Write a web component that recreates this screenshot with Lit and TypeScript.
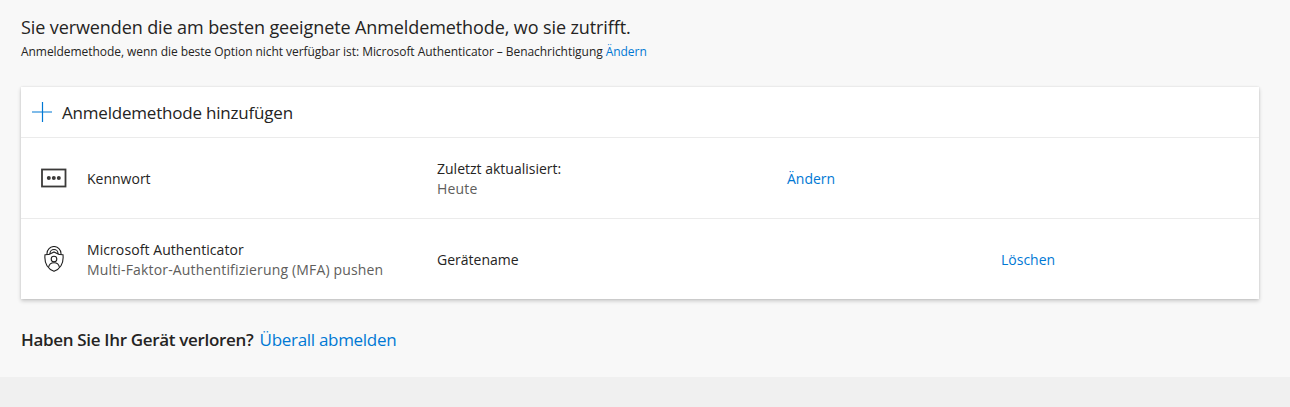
import { LitElement, html, css } from "lit";
import { customElement } from "lit/decorators.js";

@customElement("app-root")
export class AppRoot extends LitElement {
  static styles = css`
    :host { display: block; height: 407px; background: #f8f8f8; font-family: "Open Sans", "Noto Sans", sans-serif; color: #252423; overflow: hidden; }
    .main { height: 377px; padding: 0 31px 0 21px; box-sizing: border-box; background: #f8f8f8; }
    .page-foot { height: 30px; background: #f0f0f0; }
    .title { margin: 0; padding-top: 15px; font-size: 18px; line-height: 24px; font-weight: 400; letter-spacing: -0.1px; }
    .sub { margin: 0; padding-top: 3px; font-size: 12px; line-height: 20px; letter-spacing: -0.055px; }
    a { color: #0078d4; text-decoration: none; }
    .card { margin-top: 25px; background: #fff; box-shadow: 0 2px 4px rgba(0,0,0,.2), 0 0 2px rgba(0,0,0,.1); height: 212px; }
    .add { height: 50px; display: flex; align-items: center; gap: 10px; padding-left: 11px; font-size: 17px; letter-spacing: -0.2px; border-bottom: 1px solid #ebebeb; }
    .add span { padding-top: 1px; }
    .row { height: 80px; box-sizing: border-box; padding-top: 2px; display: grid; grid-template-columns: 66px 350px 350px 214px 1fr; align-items: center; font-size: 14px; line-height: 20px; }
    .row + .row { height: 81px; border-top: 1px solid #ebebeb; }
    .ico { display: flex; padding-left: 20px; margin-top: -2px; }
    .ico.shield { padding-left: 22px; }
    .name { letter-spacing: 0.08px; }
    .muted { color: #605e5c; }
    .row .muted { letter-spacing: 0.16px; }
    .foot { margin-top: 30px; font-size: 17px; line-height: 22px; letter-spacing: -0.32px; }
    .foot a { letter-spacing: -0.3px; margin-left: 2px; }
    .foot b { font-weight: 600; }
    svg { display: block; }
  `;
  render() {
    return html`
      <div class="main">
        <h1 class="title">Sie verwenden die am besten geeignete Anmeldemethode, wo sie zutrifft.</h1>
        <p class="sub">Anmeldemethode, wenn die beste Option nicht verfügbar ist: Microsoft Authenticator – Benachrichtigung <a>Ändern</a></p>
        <div class="card">
          <div class="add">
            <svg width="20" height="20" viewBox="0 0 20 20"><path d="M0 10H20.500M10.500 -.5V20" stroke="#0078d4" stroke-width="1.200" fill="none"/></svg>
            <span>Anmeldemethode hinzufügen</span>
          </div>
          <div class="row">
            <div class="ico"><svg width="26" height="20" viewBox="0 0 26 20"><rect x="1" y="1.500" width="23.500" height="17" fill="none" stroke="#3b3a39" stroke-width="1.800"/><circle cx="7.800" cy="10" r="2" fill="#3b3a39"/><circle cx="12.800" cy="10" r="2" fill="#3b3a39"/><circle cx="17.800" cy="10" r="2" fill="#3b3a39"/></svg></div>
            <div>Kennwort</div>
            <div><div>Zuletzt aktualisiert:</div><div class="muted">Heute</div></div>
            <div><a>Ändern</a></div>
            <div></div>
          </div>
          <div class="row">
            <div class="ico shield"><svg width="22" height="26" viewBox="0 0 22 26" fill="none" stroke="#1f1f1f" stroke-width="1.100"><path d="M4 9V7.500a7 7 0 0 1 14 0V9"/><path d="M7 8V7.500a4 4 0 0 1 8 0V8"/><path d="M11 6c3 2 6 2.800 9 2.800 .8 7.700-1.500 13.500-9 16.500-7.500-3-9.800-8.800-9-16.500 3 0 6-.8 9-2.800z"/><circle cx="11" cy="13" r="2.800"/><path d="M5.500 21.500c.5-3 2.800-4.800 5.500-4.800s5 1.800 5.500 4.800"/></svg></div>
            <div><div class="name">Microsoft Authenticator</div><div class="muted">Multi-Faktor-Authentifizierung (MFA) pushen</div></div>
            <div>Gerätename</div>
            <div></div>
            <div><a>Löschen</a></div>
          </div>
        </div>
        <div class="foot"><b>Haben Sie Ihr Gerät verloren?</b> <a>Überall abmelden</a></div>
      </div>
      <div class="page-foot"></div>
    `;
  }
}
